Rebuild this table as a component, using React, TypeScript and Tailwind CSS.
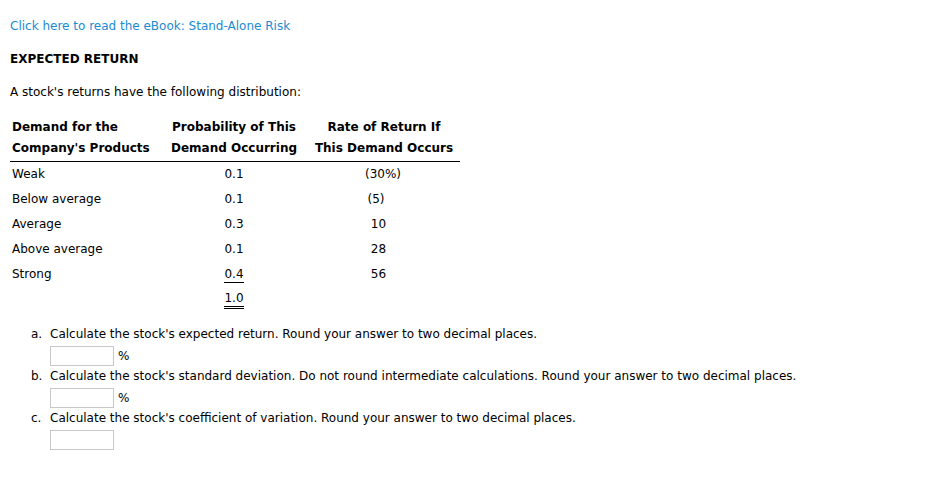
import React from "react";

const rows: { d: string; p: string; r: string; pr: string; u?: "single" }[] = [
  { d: "Weak", p: "0.1", r: "(30%)", pr: "pr-[2px]" },
  { d: "Below average", p: "0.1", r: "(5)", pr: "pr-[16px]" },
  { d: "Average", p: "0.3", r: "10", pr: "pr-[11px]" },
  { d: "Above average", p: "0.1", r: "28", pr: "pr-[11px]" },
  { d: "Strong", p: "0.4", r: "56", pr: "pr-[11px]", u: "single" },
];

function Question({ l, t, pct }: { l: string; t: string; pct?: boolean }) {
  return (
    <>
      <div className="flex leading-[17px] pl-[21px]">
        <span className="w-[19px]">{l}</span>
        <span>{t}</span>
      </div>
      <div className="flex items-center ml-[40px] mt-[3px] mb-[2px] h-[20px]">
        <div className="w-[64px] h-[20px] border border-[#c8c8c8] bg-white" />
        {pct && <span className="ml-[4px] leading-[17px]">%</span>}
      </div>
    </>
  );
}

export default function App() {
  return (
    <div
      className="w-[939px] h-[496px] bg-white text-black text-[12px] pl-[10px] pt-[18px]"
      style={{ fontFamily: '"DejaVu Sans", Verdana, sans-serif' }}
    >
      <div className="leading-[16px] text-[#1a8bd3]">Click here to read the eBook: Stand-Alone Risk</div>
      <div className="leading-[16px] mt-[17px] font-bold">EXPECTED RETURN</div>
      <div className="leading-[16px] mt-[17px]">A stock's returns have the following distribution:</div>

      <div className="w-[450px] mt-[17px]">
        <div className="grid grid-cols-[150px_148px_152px] font-bold leading-[21px] pb-[2px] border-b border-black">
          <div className="pl-[2px]">
            Demand for the
            <br />
            Company's Products
          </div>
          <div className="text-center">
            Probability of This
            <br />
            Demand Occurring
          </div>
          <div className="text-center">
            Rate of Return If
            <br />
            This Demand Occurs
          </div>
        </div>
        <div className="-mt-[1px]">
          {rows.map((r) => (
            <div key={r.d} className="grid grid-cols-[150px_148px_152px] h-[25px] items-center">
              <div className="pl-[2px] leading-[14px]">{r.d}</div>
              <div className="text-center">
                {r.u ? (
                  <span className="inline-block leading-[14px] pb-[1px] border-b border-black">{r.p}</span>
                ) : (
                  <span className="leading-[14px]">{r.p}</span>
                )}
              </div>
              <div className={`text-center leading-[14px] ${r.pr}`}>{r.r}</div>
            </div>
          ))}
          <div className="grid grid-cols-[150px_148px_152px] h-[25px] items-center">
            <div />
            <div className="text-center">
              <span className="inline-block leading-[14px] pb-[1px] border-b-[3px] border-double border-black">1.0</span>
            </div>
            <div />
          </div>
        </div>
      </div>

      <div className="mt-[15px]">
        <Question l="a." t="Calculate the stock's expected return. Round your answer to two decimal places." pct />
        <Question
          l="b."
          t="Calculate the stock's standard deviation. Do not round intermediate calculations. Round your answer to two decimal places."
          pct
        />
        <Question l="c." t="Calculate the stock's coefficient of variation. Round your answer to two decimal places." />
      </div>
    </div>
  );
}
